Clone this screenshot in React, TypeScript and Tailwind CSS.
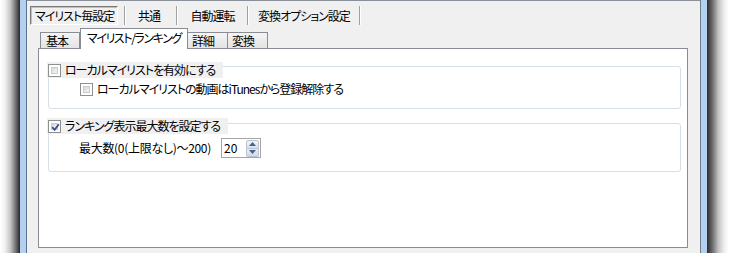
import React from "react";

const font = "[font-family:'Noto_Sans_CJK_JP','Noto_Sans',sans-serif] [font-feature-settings:'palt'] text-[12px] leading-[16px] text-black whitespace-nowrap tracking-[-1px]";

function Check({ checked = false }: { checked?: boolean }) {
  return (
    <div className="w-[13px] h-[13px] shrink-0 border border-[#8e8f8f] bg-white p-[2px]">
      <div className="relative w-full h-full bg-[linear-gradient(135deg,#d4d6d9,#f8f8f8)] border border-[#c8cbd0]">
        {checked && (
          <svg className="absolute -left-[1px] -top-[1px]" width="9" height="9" viewBox="0 0 9 9">
            <path d="M1.2 4.2 L3.6 6.8 L7.8 1.2" fill="none" stroke="#3a4f8f" strokeWidth="1.8" />
          </svg>
        )}
      </div>
    </div>
  );
}

function Sep() {
  return (
    <div className="flex h-[19px] shrink-0">
      <div className="w-px bg-[#a0a0a0]" />
      <div className="w-px bg-white" />
    </div>
  );
}

export default function App() {
  return (
    <div className={`w-[729px] h-[253px] flex overflow-hidden bg-white ${font}`}>
      {/* left frame */}
      <div className="w-[19px] shrink-0 bg-[linear-gradient(to_right,#ffffff_0%,#f2f2f2_25%,#c4c4c4_55%,#6a6a6a_85%,#383838_100%)]" />
      <div className="w-px shrink-0 bg-[#2e2e2e]" />
      <div className="w-[6px] shrink-0 bg-[#b4d0f0]" />
      <div className="w-px shrink-0 bg-[#5d7189]" />

      {/* main */}
      <div className="w-[673px] shrink-0 bg-[#f0f0f0] border-t border-[#8a9099] flex flex-col">
        {/* top button tabs */}
        <div className="flex items-center mt-[5px] pl-[3px] h-[19px]">
          <div className="w-[88px] h-[19px] shrink-0 border border-t-[#7a7a7a] border-l-[#7a7a7a] border-b-white border-r-white shadow-[inset_1px_1px_0_#c0c0c0] pl-[4px] flex items-center">
            マイリスト毎設定
          </div>
          <div className="w-[6px] shrink-0" />
          <Sep />
          <div className="w-[50px] shrink-0 text-center pr-[4px]">共通</div>
          <Sep />
          <div className="w-[69px] shrink-0 text-center">自動運転</div>
          <Sep />
          <div className="w-[110px] shrink-0 text-center">変換オプション設定</div>
          <Sep />
        </div>

        {/* inner tab strip */}
        <div className="flex items-end h-[20px] mt-[3px] ml-[11px] pl-[2px]">
          <div className="w-[40px] h-[16px] shrink-0 border border-b-0 border-[#898c95] bg-[linear-gradient(#f4f4f4,#e4e4e4)] pl-[5px] flex items-center">基本</div>
          <div className="relative z-10 w-[108px] h-[21px] shrink-0 -mb-px border border-b-0 border-[#898c95] bg-white pl-[6px] flex items-center pb-[2px] tracking-[-1.4px]">マイリスト/ランキング</div>
          <div className="w-[40px] h-[16px] shrink-0 border border-b-0 border-l-0 border-[#898c95] bg-[linear-gradient(#f4f4f4,#e4e4e4)] pl-[4px] flex items-center">詳細</div>
          <div className="w-[40px] h-[16px] shrink-0 border border-b-0 border-l-0 border-[#898c95] bg-[linear-gradient(#f4f4f4,#e4e4e4)] pl-[4px] flex items-center">変換</div>
        </div>

        {/* tab content */}
        <div className="ml-[11px] w-[650px] h-[200px] border border-[#898c95] bg-white flex flex-col">
          {/* group 1 */}
          <div className="mt-[13px] ml-[8px] mr-[6px] flex flex-col">
            <div className="relative z-10 flex items-center h-[16px] w-fit bg-[#f0f0f0] pl-[1px] pr-[8px] gap-[4px]">
              <Check />
              <span>ローカルマイリストを有効にする</span>
            </div>
            <div className="ml-[1px] -mt-[12px] h-[43px] border border-[#d5dfe5] rounded-[3px] pt-[14px] pl-[31px]">
              <div className="flex items-center h-[16px] gap-[4px]">
                <Check />
                <span>ローカルマイリストの動画はiTunesから登録解除する</span>
              </div>
            </div>
          </div>

          {/* group 2 */}
          <div className="mt-[9px] ml-[8px] mr-[6px] flex flex-col">
            <div className="relative z-10 flex items-center h-[16px] w-fit bg-[#f0f0f0] pl-[1px] pr-[8px] gap-[4px]">
              <Check checked />
              <span>ランキング表示最大数を設定する</span>
            </div>
            <div className="ml-[1px] -mt-[11px] h-[49px] border border-[#d5dfe5] rounded-[3px] pt-[14px] pl-[30px]">
              <div className="flex items-center h-[20px] gap-[10px]">
                <span className="tracking-[-0.3px]">最大数(0(上限なし)～200)</span>
                <div className="w-[40px] h-[20px] shrink-0 border border-[#a5a5a5] bg-white flex items-center justify-between pl-[2px] pr-px tracking-normal">
                  <span>20</span>
                  <div className="flex flex-col w-[13px] h-[17px]">
                    <div className="flex-1 flex items-center justify-center bg-[linear-gradient(#f0f4f9,#d8e2ee)] border border-[#b8c4d2] rounded-t-[2px]">
                      <svg width="7" height="4" viewBox="0 0 7 4"><path d="M0 4 L3.5 0 L7 4 Z" fill="#4d6185" /></svg>
                    </div>
                    <div className="flex-1 flex items-center justify-center bg-[linear-gradient(#e6ecf4,#cfdbe9)] border border-t-0 border-[#b8c4d2] rounded-b-[2px]">
                      <svg width="7" height="4" viewBox="0 0 7 4"><path d="M0 0 L7 0 L3.5 4 Z" fill="#4d6185" /></svg>
                    </div>
                  </div>
                </div>
              </div>
            </div>
          </div>
        </div>
      </div>

      {/* right frame */}
      <div className="w-px shrink-0 bg-[#6f7d8c]" />
      <div className="w-[6px] shrink-0 bg-[#b4d0f0]" />
      <div className="w-px shrink-0 bg-[#343434]" />
      <div className="w-[21px] shrink-0 bg-[linear-gradient(to_left,#ffffff_0%,#f2f2f2_20%,#c4c4c4_50%,#6a6a6a_80%,#383838_100%)]" />
    </div>
  );
}
